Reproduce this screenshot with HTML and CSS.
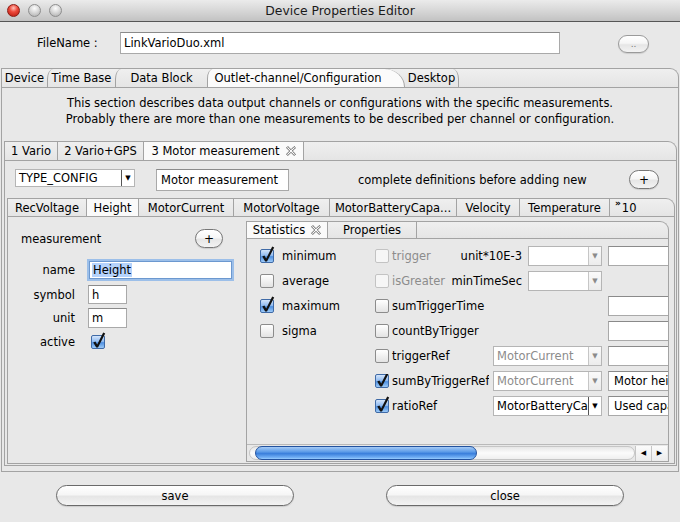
FILE: index.html
```html
<!DOCTYPE html>
<html>
<head>
<meta charset="utf-8">
<title>Device Properties Editor</title>
<link rel="stylesheet" href="styles.css">
</head>
<body>
<div class="window">
  <div class="titlebar">
    <div class="lights"><span class="light red"></span><span class="light"></span><span class="light"></span></div>
    <div class="title">Device Properties Editor</div>
    <div></div>
  </div>

  <div class="file-row">
    <span class="file-label">FileName :</span>
    <div class="field file-field">LinkVarioDuo.xml</div>
    <div class="pill dots-btn">..</div>
  </div>

  <div class="outer">
    <div class="tabbar outer-tabs">
      <div class="otab">Device</div>
      <div class="otab">Time Base</div>
      <div class="otab">Data Block</div>
      <div class="otab sel">Outlet-channel/Configuration</div>
      <div class="otab last">Desktop</div>
    </div>
    <div class="panel outer-panel">
      <p class="desc">This section describes data output channels or configurations with the specific measurements.<br>Probably there are more than one measurements to be described per channel or configuration.</p>

      <div class="ch">
        <div class="tabbar ch-tabs">
          <div class="tab">1 Vario</div>
          <div class="tab">2 Vario+GPS</div>
          <div class="tab sel">3 Motor measurement <svg class="xicon" width="10" height="10" viewBox="0 0 10 10"><path d="M0.5 1.8 L1.8 0.5 L5 3.7 L8.2 0.5 L9.5 1.8 L6.3 5 L9.5 8.2 L8.2 9.5 L5 6.3 L1.8 9.5 L0.5 8.2 L3.7 5 Z" fill="none" stroke="#555" stroke-width="0.9"/></svg></div>
        </div>
        <div class="panel ch-panel">
          <div class="config-row">
            <div class="combo type-combo"><span class="combo-text">TYPE_CONFIG</span><span class="combo-arrow dark">&#9660;</span></div>
            <div class="field cfg-name">Motor measurement</div>
            <span class="cfg-note">complete definitions before adding new</span>
            <div class="pill plus-btn cfg-plus">+</div>
          </div>

          <div class="meas">
            <div class="tabbar m-tabs">
              <div class="tab">RecVoltage</div>
              <div class="tab sel">Height</div>
              <div class="tab">MotorCurrent</div>
              <div class="tab">MotorVoltage</div>
              <div class="tab">MotorBatteryCapa...</div>
              <div class="tab">Velocity</div>
              <div class="tab">Temperature</div>
              <div class="tab more"><span class="chev">&#187;</span>10</div>
            </div>
            <div class="panel m-panel">
              <div class="left">
                <div class="meas-head"><span>measurement</span><div class="pill plus-btn">+</div></div>
                <div class="form">
                  <span class="lbl">name</span>
                  <div class="field name-field"><span class="hl">Height</span></div>
                  <span class="lbl">symbol</span>
                  <div class="field small-field">h</div>
                  <span class="lbl">unit</span>
                  <div class="field small-field">m</div>
                  <span class="lbl">active</span>
                  <span class="cb checked active-cb"><svg viewBox="0 0 14 14" width="14" height="14"><path d="M2.2 7.6 L4.4 6.4 L6.2 9.6 L12.2 -2.4 L14.2 -1.4 L7 12.4 L5.2 12.4 Z" fill="#111"/></svg></span>
                </div>
              </div>

              <div class="stats">
                <div class="tabbar s-tabs">
                  <div class="tab sel">Statistics <svg class="xicon" width="10" height="10" viewBox="0 0 10 10"><path d="M0.5 1.8 L1.8 0.5 L5 3.7 L8.2 0.5 L9.5 1.8 L6.3 5 L9.5 8.2 L8.2 9.5 L5 6.3 L1.8 9.5 L0.5 8.2 L3.7 5 Z" fill="none" stroke="#555" stroke-width="0.9"/></svg></div>
                  <div class="tab">Properties</div>
                </div>
                <div class="panel s-panel">
                  <div class="viewport">
                    <div class="s-grid">
                      <label class="chk c1"><span class="cb checked"><svg viewBox="0 0 14 14" width="14" height="14"><path d="M2.2 7.6 L4.4 6.4 L6.2 9.6 L12.2 -2.4 L14.2 -1.4 L7 12.4 L5.2 12.4 Z" fill="#111"/></svg></span>minimum</label>
                      <div class="bc"><label class="chk c2 dis"><span class="cb"></span>trigger</label><span class="rl">unit*10E-3</span></div>
                      <div class="combo dcell"><span class="combo-text"></span><span class="combo-arrow">&#9660;</span></div>
                      <div class="field fcell"></div>

                      <label class="chk c1"><span class="cb"></span>average</label>
                      <div class="bc"><label class="chk c2 dis"><span class="cb"></span>isGreater</label><span class="rl">minTimeSec</span></div>
                      <div class="combo dcell"><span class="combo-text"></span><span class="combo-arrow">&#9660;</span></div>
                      <div class="fcell empty"></div>

                      <label class="chk c1"><span class="cb checked"><svg viewBox="0 0 14 14" width="14" height="14"><path d="M2.2 7.6 L4.4 6.4 L6.2 9.6 L12.2 -2.4 L14.2 -1.4 L7 12.4 L5.2 12.4 Z" fill="#111"/></svg></span>maximum</label>
                      <label class="chk c2 bcell"><span class="cb"></span>sumTriggerTime</label>
                      <div class="field fcell"></div>

                      <label class="chk c1"><span class="cb"></span>sigma</label>
                      <label class="chk c2 bcell"><span class="cb"></span>countByTrigger</label>
                      <div class="field fcell"></div>

                      <label class="chk c2 bcell"><span class="cb"></span>triggerRef</label>
                      <div class="combo cdcell dis"><span class="combo-text">MotorCurrent</span><span class="combo-arrow">&#9660;</span></div>
                      <div class="field fcell"></div>

                      <label class="chk c2 bcell clip"><span class="cb checked"><svg viewBox="0 0 14 14" width="14" height="14"><path d="M2.2 7.6 L4.4 6.4 L6.2 9.6 L12.2 -2.4 L14.2 -1.4 L7 12.4 L5.2 12.4 Z" fill="#111"/></svg></span><span class="cliptext">sumByTriggerRef</span></label>
                      <div class="combo cdcell dis"><span class="combo-text">MotorCurrent</span><span class="combo-arrow">&#9660;</span></div>
                      <div class="field fcell">Motor height</div>

                      <label class="chk c2 bcell"><span class="cb checked"><svg viewBox="0 0 14 14" width="14" height="14"><path d="M2.2 7.6 L4.4 6.4 L6.2 9.6 L12.2 -2.4 L14.2 -1.4 L7 12.4 L5.2 12.4 Z" fill="#111"/></svg></span>ratioRef</label>
                      <div class="combo cdcell"><span class="combo-text">MotorBatteryCapacity</span><span class="combo-arrow dark">&#9660;</span></div>
                      <div class="field fcell">Used capacity</div>
                    </div>
                  </div>
                  <div class="hscroll">
                    <div class="track"><div class="thumb"></div></div>
                    <div class="arrows"><span class="arr">&#9664;</span><span class="arr">&#9654;</span></div>
                  </div>
                </div>
              </div>
            </div>
          </div>
        </div>
      </div>
    </div>
  </div>

  <div class="buttons">
    <div class="pill big-btn">save</div>
    <div class="pill big-btn">close</div>
  </div>
</div>
</body>
</html>
```

FILE: styles.css
```css
* { box-sizing: border-box; }

body {
  margin: 0;
  background: #e8e8e8;
  font-family: "DejaVu Sans", sans-serif;
  font-size: 11.5px;
  color: #000;
}

.window {
  width: 680px;
  height: 522px;
  display: flex;
  flex-direction: column;
  overflow: hidden;
}

/* ---------- title bar ---------- */
.titlebar {
  height: 22px;
  flex: none;
  display: grid;
  grid-template-columns: 1fr auto 1fr;
  align-items: center;
  background: linear-gradient(#ebebeb, #d3d3d3 60%, #c2c2c2);
  border-bottom: 1px solid #565656;
}
.lights { display: flex; gap: 8px; padding-left: 7px; }
.light {
  width: 13px; height: 13px; border-radius: 50%;
  background: radial-gradient(circle at 50% 30%, #fdfdfd 0, #d9d9d9 45%, #a9a9a9 100%);
  border: 1px solid #8e8e8e;
}
.light.red {
  background: radial-gradient(circle at 50% 28%, #ffc3bb 0, #ee4b3d 40%, #b5160c 100%);
  border-color: #8c1d16;
}
.title { font-size: 12.4px; color: #1a1a1a; }

/* ---------- file row ---------- */
.file-row {
  height: 46px;
  flex: none;
  display: flex;
  align-items: flex-start;
  padding-top: 10px;
}
.file-label { margin-left: 37px; width: 83px; line-height: 22px; }
.field {
  background: #fff;
  border: 1px solid #a9a9a9;
  border-top-color: #8a8a8a;
  padding-left: 3px;
  white-space: nowrap;
  overflow: hidden;
}
.file-field { width: 440px; height: 22px; line-height: 20px; }
.pill {
  display: flex; align-items: center; justify-content: center;
  border: 1px solid #777;
  border-radius: 10px;
  background: linear-gradient(#ffffff, #f6f6f6 45%, #e6e6e6 55%, #f3f3f3);
  box-shadow: 0 1px 1px rgba(0,0,0,0.12);
}
.dots-btn { margin-left: 58px; margin-top: 3px; width: 31px; height: 18px; color: #777; font-size: 9px; border-color: #9a9a9a; }

/* ---------- generic tabs & panels ---------- */
.tabbar {
  display: flex;
  flex: none;
  border: 1px solid #a3a3a3;
  border-bottom: none;
  border-radius: 0 9px 0 0;
  background: linear-gradient(#efefef, #e5e5e5);
}
.tab {
  display: flex; align-items: center; justify-content: center;
  border-right: 1px solid #a3a3a3;
  white-space: nowrap;
  flex: none;
}
.tab.sel { background: #fafafa; }
.panel { border: 1px solid #a3a3a3; background: #e8e8e8; }
.xicon { margin-left: 6px; }

/* outer (aqua-style tabs with curved edges) */
.outer { margin: 0 1px; display: flex; flex-direction: column; flex: none; }
.outer-tabs { height: 19px; }
.otab {
  display: flex; align-items: center; justify-content: center;
  white-space: nowrap; flex: none;
  border-left: 1px solid #a3a3a3;
  border-top-left-radius: 6px 10px;
}
.otab:nth-child(1) { width: 45px; border-left: none; }
.otab:nth-child(2) { width: 68px; }
.otab:nth-child(3) { width: 92px; }
.otab.sel {
  width: 198px;
  padding-right: 16px;
  background: #fbfbfb;
  border-right: 1px solid #a3a3a3;
  border-top-right-radius: 22px 19px;
}
.otab.last {
  width: 54px;
  border-left: none;
  border-right: 1px solid #a3a3a3;
  border-top-left-radius: 0;
  border-top-right-radius: 6px 10px;
}
.outer-panel { height: 385px; display: flex; flex-direction: column; }
.desc { margin: 7px 0 0; line-height: 16px; text-align: center; }

/* channel */
.ch { margin: 14px 1px 0 2px; display: flex; flex-direction: column; }
.ch-tabs { height: 19px; }
.ch-tabs .tab:nth-child(1) { width: 53px; }
.ch-tabs .tab:nth-child(2) { width: 86px; }
.ch-tabs .tab:nth-child(3) { width: 160px; }
.ch-panel { height: 306px; display: flex; flex-direction: column; }

.config-row { height: 37px; flex: none; display: flex; align-items: flex-start; padding-top: 8px; }
.combo { display: flex; background: #fff; border: 1px solid #b5b5b5; white-space: nowrap; overflow: hidden; }
.combo-text { flex: 1; min-width: 0; padding-left: 3px; overflow: hidden; display: flex; align-items: center; }
.combo-arrow {
  width: 13px; flex: none; display: flex; align-items: center; justify-content: center;
  font-size: 7px; color: #8a8a8a; border-left: 1px solid #c6c6c6;
  background: linear-gradient(#fafafa, #ececec);
}
.combo-arrow.dark { color: #000; border: 1px solid #555; background: #fff; margin: -1px -1px -1px 0; width: 14px; }
.type-combo { margin-left: 10px; width: 120px; height: 18px; }
.cfg-name { margin-left: 21px; width: 133px; height: 22px; line-height: 20px; padding-left: 4px; }
.cfg-note { margin-left: 69px; line-height: 22px; }
.plus-btn { width: 30px; height: 19px; font-size: 12px; }
.cfg-plus { margin-left: auto; margin-right: 17px; margin-top: 1px; }

/* measurement tabs */
.meas { margin: 0 1px 0 2px; display: flex; flex-direction: column; }
.m-tabs { height: 18px; }
.m-tabs .tab:nth-child(1) { width: 79px; }
.m-tabs .tab:nth-child(2) { width: 52px; }
.m-tabs .tab:nth-child(3) { width: 95px; }
.m-tabs .tab:nth-child(4) { width: 96px; }
.m-tabs .tab:nth-child(5) { width: 127px; }
.m-tabs .tab:nth-child(6) { width: 63px; }
.m-tabs .tab:nth-child(7) { width: 90px; }
.m-tabs .tab.more { border-right: none; justify-content: flex-start; padding-left: 5px; }
.chev { font-size: 9px; font-weight: bold; align-self: flex-start; line-height: 9px; margin-right: 1px; }
.m-panel { height: 248px; display: flex; }

/* left form */
.left { width: 238px; flex: none; padding-top: 12px; }
.meas-head { display: flex; align-items: center; justify-content: space-between; height: 19px; padding: 0 23px 0 13px; }
.meas-head .plus-btn { width: 28px; }
.form {
  margin-top: 11px;
  display: grid;
  grid-template-columns: 67px auto;
  grid-template-rows: 22px 19px 20px 20px;
  column-gap: 12px;
  row-gap: 4px;
  justify-items: start;
}
.lbl { justify-self: end; align-self: center; }
.name-field {
  margin-left: 2px; width: 143px; height: 18px; align-self: center;
  border: 1px solid #6c98cf;
  box-shadow: 0 0 0 2px #9cbfe9;
  line-height: 16px; padding-left: 2px;
}
.hl { background: #b5d3fc; padding: 0 1px; }
.small-field { margin-left: 1px; width: 39px; height: 100%; line-height: 18px; }
.active-cb { margin-left: 4px; align-self: center; }

/* checkboxes */
.cb {
  width: 14px; height: 14px; flex: none;
  border: 1px solid #8c8c8c;
  border-radius: 2px;
  background: linear-gradient(#ffffff, #f1f1f1 50%, #e3e3e3);
  position: relative;
  display: inline-block;
}
.cb svg { position: absolute; left: -1px; top: -1px; overflow: visible; }
.cb.checked {
  border-color: #3f6aa6;
  background: linear-gradient(#d4e5fb, #8ab7ef 50%, #4e8fe0 55%, #9ccaf8);
}
.chk { display: flex; align-items: center; white-space: nowrap; }
.chk.c1 .cb { margin-right: 8px; }
.chk.c2 .cb { margin-right: 3px; }
.chk.dis { color: #8c8c8c; }
.chk.dis .cb { border-color: #c3c3c3; background: #f6f6f6; }

/* statistics */
.stats { width: 423px; flex: none; margin-top: 4px; display: flex; flex-direction: column; }
.s-tabs { height: 17px; }
.s-tabs .tab:nth-child(1) { width: 81px; }
.s-tabs .tab:nth-child(2) { width: 89px; }
.s-panel { height: 224px; display: flex; flex-direction: column; overflow: hidden; }
.viewport { flex: 1; overflow: hidden; }
.s-grid {
  padding: 4px 0 0 13px;
  display: grid;
  grid-template-columns: 115px 118px 35px 74px 6px 91px;
  grid-auto-rows: 25px;
  align-items: center;
  width: 460px;
}
.c1 { grid-column: 1; }
.bc { grid-column: 2 / 4; display: flex; align-items: center; padding-right: 6px; }
.bc .rl { margin-left: auto; }
.bcell { grid-column: 2; }
.clip { overflow: hidden; padding-right: 4px; }
.cliptext { overflow: hidden; min-width: 0; }
.dcell { grid-column: 4; height: 20px; }
.cdcell { grid-column: 3 / 5; height: 20px; }
.cdcell.dis { color: #8c8c8c; }
.fcell { grid-column: 6; height: 20px; line-height: 18px; padding-left: 5px; }

/* horizontal scrollbar */
.hscroll { height: 17px; flex: none; display: flex; align-items: center; padding-left: 2px; border-top: 1px solid #b9b9b9; }
.track {
  width: 386px; height: 14px; border-radius: 7px;
  background: linear-gradient(#e6e6e6, #fbfbfb 50%, #efefef);
  border: 1px solid #c5c5c5;
  padding-left: 5px;
  display: flex; align-items: center;
}
.thumb {
  width: 222px; height: 14px; border-radius: 7px;
  border: 1px solid #23529e;
  background: linear-gradient(#a6cbf6, #5d9ce8 40%, #3a7fdc 55%, #77b4f7 90%, #9ed0ff);
}
.arrows { display: flex; height: 15px; }
.arr { width: 16px; display: flex; align-items: center; justify-content: center; font-size: 7px; border-left: 1px solid #c5c5c5; background: linear-gradient(#fbfbfb, #ececec); }

/* bottom buttons */
.buttons { flex: none; display: flex; padding: 13px 0 0 56px; gap: 92px; }
.big-btn { width: 238px; height: 21px; font-size: 11.5px; border-color: #6a6a6a; border-radius: 11px; }
```
